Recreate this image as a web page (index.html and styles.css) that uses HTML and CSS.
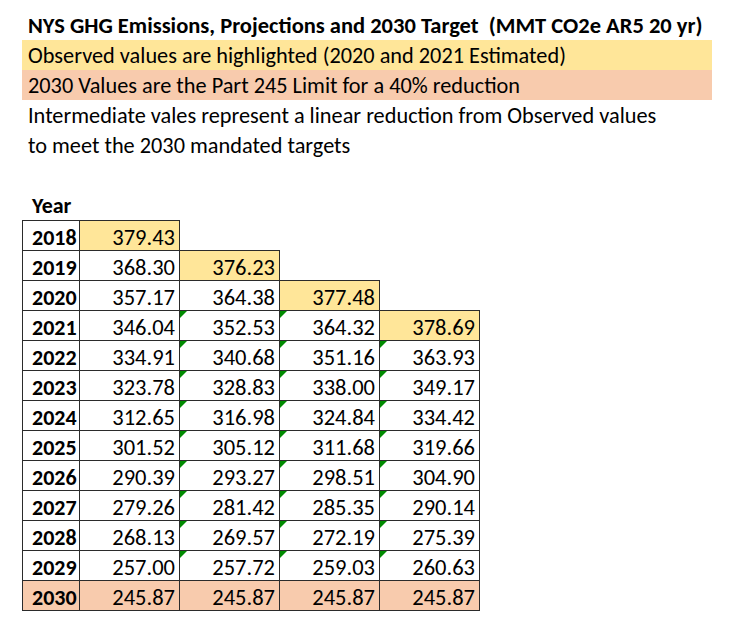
FILE: index.html
```html
<!DOCTYPE html>
<html lang="en">
<head>
<meta charset="utf-8">
<title>NYS GHG Emissions</title>
<link rel="stylesheet" href="styles.css">
</head>
<body>
<div class="sheet">
  <div class="notes">
    <div class="line title">NYS GHG Emissions, Projections and 2030 Target  (MMT CO2e AR5 20 yr)</div>
    <div class="line band observed">Observed values are highlighted (2020 and 2021 Estimated)</div>
    <div class="line band limit">2030 Values are the Part 245 Limit for a 40% reduction</div>
    <div class="line">Intermediate vales represent a linear reduction from Observed values</div>
    <div class="line">to meet the 2030 mandated targets</div>
  </div>

  <div class="year-label">Year</div>
  <table class="grid">
    <colgroup><col class="c-year"><col class="c-val"><col class="c-val"><col class="c-val"><col class="c-val"></colgroup>
    <tbody>
      <tr><th>2018</th><td class="obs">379.43</td><td class="empty"></td><td class="empty"></td><td class="empty"></td></tr>
      <tr><th>2019</th><td>368.30</td><td class="obs">376.23</td><td class="empty"></td><td class="empty"></td></tr>
      <tr><th>2020</th><td>357.17</td><td>364.38</td><td class="obs">377.48</td><td class="empty"></td></tr>
      <tr><th>2021</th><td>346.04</td><td class="flag">352.53</td><td class="flag">364.32</td><td class="obs">378.69</td></tr>
      <tr><th>2022</th><td>334.91</td><td class="flag">340.68</td><td class="flag">351.16</td><td class="flag">363.93</td></tr>
      <tr><th>2023</th><td>323.78</td><td class="flag">328.83</td><td class="flag">338.00</td><td class="flag">349.17</td></tr>
      <tr><th>2024</th><td>312.65</td><td class="flag">316.98</td><td class="flag">324.84</td><td class="flag">334.42</td></tr>
      <tr><th>2025</th><td>301.52</td><td class="flag">305.12</td><td class="flag">311.68</td><td class="flag">319.66</td></tr>
      <tr><th>2026</th><td>290.39</td><td class="flag">293.27</td><td class="flag">298.51</td><td class="flag">304.90</td></tr>
      <tr><th>2027</th><td>279.26</td><td class="flag">281.42</td><td class="flag">285.35</td><td class="flag">290.14</td></tr>
      <tr><th>2028</th><td>268.13</td><td class="flag">269.57</td><td class="flag">272.19</td><td class="flag">275.39</td></tr>
      <tr><th>2029</th><td>257.00</td><td class="flag">257.72</td><td class="flag">259.03</td><td class="flag">260.63</td></tr>
      <tr class="target"><th>2030</th><td>245.87</td><td>245.87</td><td>245.87</td><td>245.87</td></tr>
    </tbody>
  </table>
</div>
</body>
</html>
```
FILE: styles.css
```css
html, body {
  margin: 0;
  padding: 0;
  background: #ffffff;
}

.sheet {
  font-family: "Carlito", "Open Sans", sans-serif;
  color: #000000;
  padding: 10px 0 0 22px;
  width: 690px;
}

.notes {
  display: flex;
  flex-direction: column;
}

.line {
  height: 30px;
  box-sizing: border-box;
  padding-top: 2px;
  line-height: 28px;
  padding-left: 6px;
  font-size: 22.3px;
  white-space: pre;
}

.title {
  font-weight: bold;
  font-size: 22.5px;
}

.observed { background: #ffe699; }
.limit { background: #f8cbad; }

.year-label {
  margin-top: 30px;
  height: 30px;
  box-sizing: border-box;
  padding-top: 2px;
  line-height: 28px;
  padding-left: 10px;
  font-weight: bold;
  font-size: 22px;
}

.grid {
  border-collapse: collapse;
  table-layout: fixed;
  width: 457px;
  font-size: 22.5px;
}

.c-year { width: 57px; }
.c-val { width: 100px; }

.grid tr { height: 30px; }

.grid th,
.grid td {
  border: 1px solid #2b2b2b;
  padding: 5px 0 0 0;
  line-height: 24px;
  white-space: nowrap;
  vertical-align: top;
}

.grid th {
  text-align: left;
  padding-left: 9px;
  font-weight: bold;
  font-size: 22px;
}

.grid td {
  text-align: right;
  padding-right: 4px;
  position: relative;
}

.grid td.empty {
  border: none;
}

.grid td.obs { background: #ffe699; }

.grid tr.target th,
.grid tr.target td { background: #f8cbad; }

.grid td.flag::before {
  content: "";
  position: absolute;
  left: 0;
  top: 0;
  border-top: 7px solid #008a00;
  border-right: 7px solid transparent;
}
```
